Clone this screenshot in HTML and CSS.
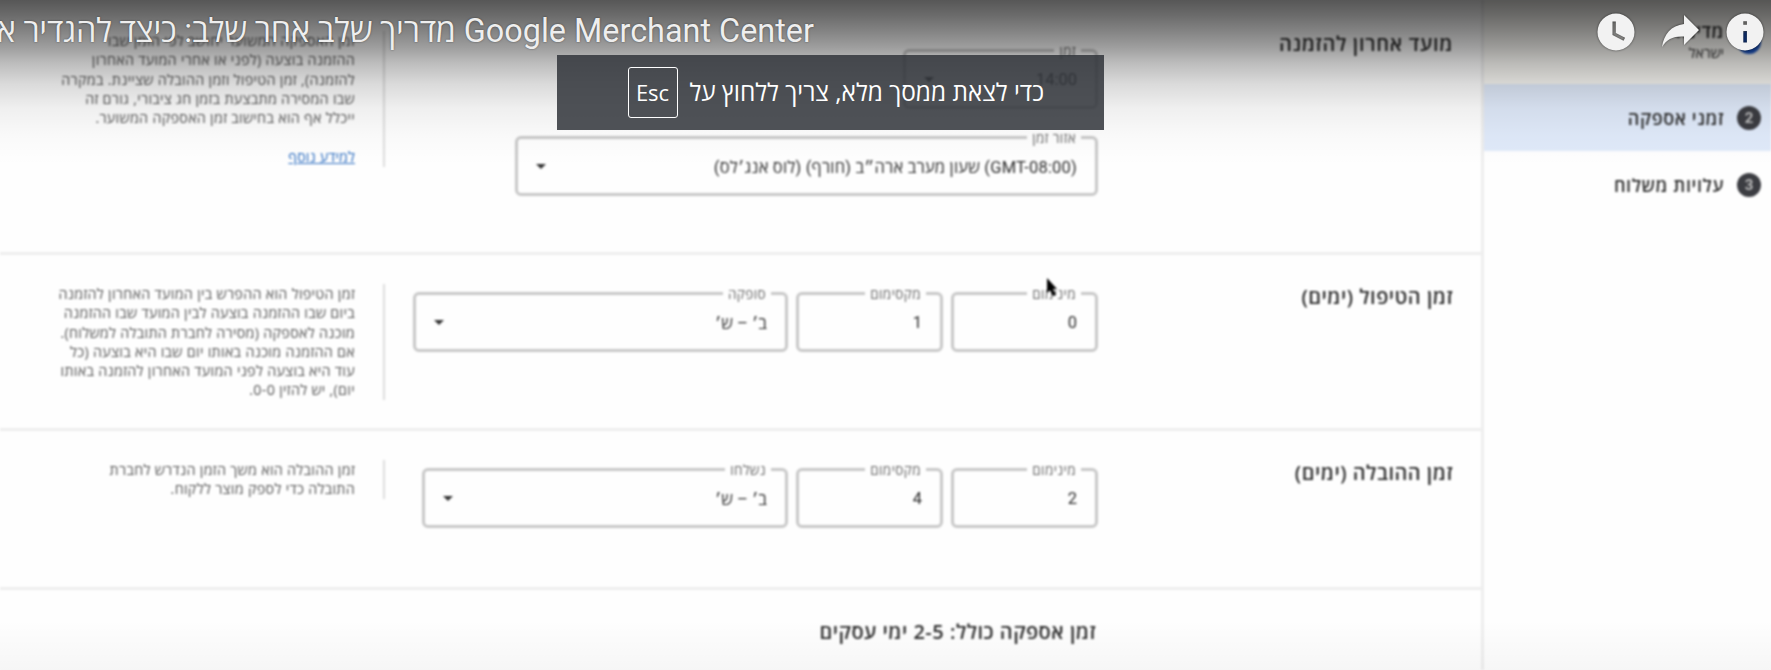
FILE: index.html
```html
<!DOCTYPE html>
<html lang="he" dir="rtl">
<head>
    <meta charset="UTF-8">
    <meta name="viewport" content="width=device-width, initial-scale=1.0">
    <title>Google Merchant Center</title>
    <link rel="stylesheet" href="styles.css">
</head>
<body>
    <div class="player">
        <div class="video">
            <aside class="steps">
                <div class="step done">
                    <span class="num"></span>
                    <div class="step-text"><b>מדינה</b><small>ישראל</small></div>
                </div>
                <div class="step active"><span class="num">2</span><b>זמני אספקה</b></div>
                <div class="step"><span class="num">3</span><b>עלויות משלוח</b></div>
            </aside>
            <main>
                <section class="cutoff">
                    <h2>מועד אחרון להזמנה</h2>
                    <div class="fields column">
                        <div class="field time"><label>זמן</label><span>14:00</span><i class="arrow"></i></div>
                        <div class="field zone"><label>אזור זמן</label><span>(GMT-08:00) שעון מערב ארה״ב (חורף) (לוס אנג׳לס)</span><i class="arrow"></i></div>
                    </div>
                    <div class="help">
                        <p>זמן האספקה המשוער יחושב לפי הזמן שבו<br>ההזמנה בוצעה (לפני או אחרי המועד האחרון<br>להזמנה), זמן הטיפול וזמן ההובלה שציינת. במקרה<br>שבו המסירה מתבצעת בזמן חג ציבורי, גורם זה<br>ייכלל אף הוא בחישוב זמן האספקה המשוער.</p>
                        <a href="#">למידע נוסף</a>
                    </div>
                </section>
                <section class="handling">
                    <h2>זמן הטיפול (ימים)</h2>
                    <div class="fields">
                        <div class="field"><label>מינימום</label><span>0</span></div>
                        <div class="field"><label>מקסימום</label><span>1</span></div>
                        <div class="field days"><label>סופקה</label><span>ב׳ – ש׳</span><i class="arrow"></i></div>
                    </div>
                    <div class="help">
                        <p>זמן הטיפול הוא ההפרש בין המועד האחרון להזמנה<br>ביום שבו ההזמנה בוצעה לבין המועד שבו ההזמנה<br>מוכנה לאספקה (מסירה לחברת התובלה למשלוח).<br>אם ההזמנה מוכנה באותו יום שבו היא בוצעה (כל<br>עוד היא בוצעה לפני המועד האחרון להזמנה באותו<br>יום), יש להזין 0-0.</p>
                    </div>
                </section>
                <section class="transit">
                    <h2>זמן ההובלה (ימים)</h2>
                    <div class="fields">
                        <div class="field"><label>מינימום</label><span>2</span></div>
                        <div class="field"><label>מקסימום</label><span>4</span></div>
                        <div class="field days"><label>נשלחו</label><span>ב׳ – ש׳</span><i class="arrow"></i></div>
                    </div>
                    <div class="help">
                        <p>זמן ההובלה הוא משך הזמן הנדרש לחברת<br>התובלה כדי לספק מוצר ללקוח.</p>
                    </div>
                </section>
                <section class="total">
                    <h2>זמן אספקה כולל: 2-5 ימי עסקים</h2>
                </section>
            </main>
            <svg class="cursor" viewBox="0 0 12 20" width="12" height="20"><path d="M1 0v15l3-3 3 6 3-1-3-6h4z"/></svg>
        </div>
        <div class="shade"></div>
        <header class="chrome">
            <div class="actions">
                <svg class="info" viewBox="0 0 38 38" width="38" height="38"><path fill-rule="evenodd" d="M19 .5a18.5 18.5 0 1 0 0 37a18.5 18.5 0 1 0 0-37zM17.3 8.3h3.6v3.4h-3.6zM17.3 18h3.6v11.5h-3.6z"/></svg>
                <svg class="share" viewBox="0 0 39 34" width="39" height="34"><path d="M23 1L38 16L23 31V22.5C12 22 6 25 1 33C3 20 10 11.5 23 10z"/></svg>
                <svg class="later" viewBox="0 0 38 38" width="38" height="38"><path fill-rule="evenodd" d="M19 .5a18.5 18.5 0 1 0 0 37a18.5 18.5 0 1 0 0-37zM15.5 8.5h3.3v11.5l9.3 4.8-1.6 3-11-5.8z"/></svg>
            </div>
            <div class="title"><bdi>Google Merchant Center</bdi> <span>מדריך שלב אחר שלב: כיצד להגדיר א</span></div>
        </header>
        <div class="toast"><span>כדי לצאת ממסך מלא, צריך ללחוץ על</span><kbd>Esc</kbd></div>
    </div>
</body>
</html>
```
FILE: styles.css
```css
*{
    box-sizing: border-box;
}
body{
    margin: 0;
    overflow: hidden;
    background-color: #fff;
    font-family: "Open Sans", "Noto Sans", sans-serif;
}
.player{
    position: relative;
    width: 1771px;
    height: 670px;
    overflow: hidden;
}
/* the paused video frame */
.video{
    display: flex;
    height: 670px;
    background-color: #fefefe;
    color: #2c2c2c;
    filter: blur(0.9px);
}
.steps{
    width: 290px;
    border-left: 3px solid #eee;
}
.step{
    display: flex;
    align-items: center;
    gap: 13px;
    height: 67px;
    padding-right: 10px;
    font-size: 18px;
    letter-spacing: 0.6px;
}
.step b{
    font-weight: 600;
}
.step.done{
    height: 84px;
    background-color: #fcfbf7;
}
.step-text{
    display: flex;
    flex-direction: column;
    line-height: 22px;
}
.step-text small{
    font-size: 14px;
    letter-spacing: 0;
}
.step.done .num{
    background-color: #1a53c0;
}
.step.active{
    background-color: #e0eafa;
}
.num{
    width: 24px;
    height: 24px;
    border-radius: 50%;
    background-color: #3c3d42;
    color: #bbb;
    font: bold 15px/24px Roboto, sans-serif;
    letter-spacing: 0;
    text-align: center;
}
main{
    flex: 1;
}
section{
    display: flex;
    border-bottom: 3px solid #eee;
}
.cutoff{
    height: 255px;
}
.handling{
    height: 176px;
}
.transit{
    height: 159px;
}
h2{
    width: 383px;
    margin: 0;
    padding: 30px 28px 0 0;
    font-size: 20px;
    line-height: 24px;
    font-weight: 600;
    letter-spacing: 0.5px;
    white-space: nowrap;
}
.cutoff h2{
    padding-top: 32px;
    letter-spacing: 0.7px;
}
.fields{
    display: flex;
    gap: 8px;
    width: 713px;
    padding-top: 37px;
}
.fields.column{
    flex-direction: column;
    gap: 27px;
    padding-top: 49px;
}
.field{
    position: relative;
    display: flex;
    align-items: center;
    justify-content: space-between;
    width: 147px;
    height: 60px;
    padding: 0 18px 0 18px;
    border: 3px solid #c8c8c8;
    border-radius: 6px;
    font-size: 16.5px;
}
.field span{
    font-family: Roboto, "Open Sans", sans-serif;
}
.field label{
    position: absolute;
    top: -10px;
    right: 14px;
    padding: 0 5px;
    background-color: #fefefe;
    color: #666;
    font-size: 13.5px;
    letter-spacing: 0.4px;
    line-height: 18px;
}
.field.time{
    width: 195px;
}
.field.zone{
    width: 583px;
}
.zone span{
    letter-spacing: 0.2px;
}
.handling .days{
    width: 375px;
}
.transit .days{
    width: 366px;
}
.arrow{
    border: 5.5px solid transparent;
    border-top-color: #333;
    border-bottom: 0;
}
.help{
    align-self: flex-start;
    margin-top: 29px;
    padding-right: 28px;
    border-right: 2px solid #ddd;
    color: #555;
    font-size: 14.3px;
    letter-spacing: 0.3px;
    line-height: 19.3px;
    white-space: nowrap;
}
.help p{
    margin: 0;
}
.cutoff .help{
    height: 136px;
    margin-top: 31px;
}
.cutoff .help a{
    display: block;
    margin-top: 20px;
    letter-spacing: 0.1px;
    color: #2a6cc0;
}
.total{
    border: 0;
}
.total h2{
    padding: 30px 385px 0 0;
}
.cursor{
    position: absolute;
    left: 1046px;
    top: 278px;
}
/* player chrome over the frame */
.shade{
    position: absolute;
    inset: 0;
    background: linear-gradient(rgba(0,0,0,.66), rgba(0,0,0,.58) 15px, rgba(0,0,0,.49) 30px, rgba(0,0,0,.38) 47px, rgba(0,0,0,.26) 63px, rgba(0,0,0,.14) 84px, rgba(0,0,0,.06) 108px, rgba(0,0,0,.02) 135px, rgba(0,0,0,0) 165px, rgba(0,0,0,0) 620px, rgba(0,0,0,.03));
}
.chrome{
    position: absolute;
    top: 0;
    left: 0;
    right: 0;
    display: flex;
    justify-content: space-between;
}
.actions{
    display: flex;
    padding: 13px 7px 0 0;
    fill: #f2f2f2;
    filter: drop-shadow(0 0 1px rgba(0,0,0,.6));
}
.share{
    margin: 1px 26px 0 26px;
}
.title{
    width: 814px;
    height: 60px;
    color: #eee;
    font-family: Roboto, "Open Sans", sans-serif;
    font-size: 32.4px;
    line-height: 63px;
    white-space: nowrap;
    text-shadow: 0 0 2px rgba(0,0,0,.5);
}
.title span{
    letter-spacing: -0.2px;
}
.toast{
    position: absolute;
    left: 557px;
    top: 55px;
    display: flex;
    align-items: center;
    width: 547px;
    height: 75px;
    padding-right: 60px;
    gap: 12px;
    background-color: rgba(50,53,59,.86);
    color: #fff;
    font-size: 24.4px;
    white-space: nowrap;
}
.toast span{
    margin-top: -3px;
}
.toast kbd{
    width: 50px;
    height: 51px;
    border: 1px solid #fff;
    border-radius: 3px;
    font-family: "Open Sans", sans-serif;
    font-size: 22px;
    line-height: 49px;
    text-align: center;
}
```
